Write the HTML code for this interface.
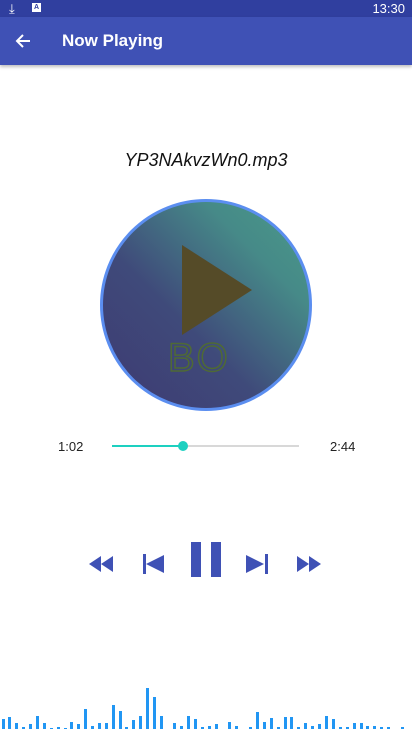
<!DOCTYPE html>
<html><head><meta charset="utf-8"><style>
body{margin:0;width:412px;height:729px;background:#fff;position:relative;overflow:hidden;font-family:"Liberation Sans",Roboto,sans-serif}
.a{position:absolute}
.bar{position:absolute;bottom:0;width:3px;background:#2196f3}
</style></head><body>
<div class="a" style="left:0;top:0;width:412px;height:17px;background:#303f9f"></div>
<div class="a" style="left:9px;top:1px;color:#fff;font-size:13px">⤓</div>
<div class="a" style="left:32px;top:3px;width:9px;height:9px;background:#fff;font-size:7px;color:#303f9f;text-align:center;line-height:9px;font-weight:bold">A</div>
<div class="a" style="right:7px;top:1px;color:#fff;font-size:13px">13:30</div>
<div class="a" style="left:0;top:17px;width:412px;height:48px;background:#3f51b5;box-shadow:0 2px 3px rgba(0,0,0,.25)"></div>
<svg class="a" style="left:14px;top:32px" width="18" height="18" viewBox="0 0 18 18"><path d="M16 9H3M9 3L3 9l6 6" stroke="#fff" stroke-width="2" fill="none"/></svg>
<div class="a" style="left:62px;top:31px;color:#fff;font-size:17px;font-weight:bold">Now Playing</div>
<div class="a" style="left:0;width:412px;top:150px;text-align:center;font-size:18px;font-style:italic;color:#111">YP3NAkvzWn0.mp3</div>
<div class="a" style="left:100px;top:199px;width:206px;height:206px;border-radius:50%;border:3px solid #5b8ef0;background:linear-gradient(45deg,#3e3a72 0%,#3f4a7a 40%,#468a88 75%,#4a9a8a 100%)"></div>
<svg class="a" style="left:180px;top:244px" width="75" height="92"><polygon points="2,1 72,46 2,91" fill="#554b28"/></svg>
<div class="a" style="left:168px;top:336px;font-size:40px;color:transparent;-webkit-text-stroke:1.5px #4f6a35;letter-spacing:2px">BO</div>
<div class="a" style="left:58px;top:439px;font-size:13px;color:#222">1:02</div>
<div class="a" style="left:330px;top:439px;font-size:13px;color:#222">2:44</div>
<div class="a" style="left:112px;top:445px;width:187px;height:2px;background:#d8d8d8"></div>
<div class="a" style="left:112px;top:445px;width:71px;height:2px;background:#1dd0c0"></div>
<div class="a" style="left:178px;top:441px;width:10px;height:10px;border-radius:50%;background:#1dd0c0"></div>
<svg class="a" style="left:0;top:530px" width="412" height="60" fill="#3f51b5">
<polygon points="89,34 101,26 101,42"/><polygon points="101,34 113,26 113,42"/>
<rect x="143" y="24" width="3" height="20"/><polygon points="146,34 164,25 164,43"/>
<rect x="191" y="12" width="10" height="35"/><rect x="211" y="12" width="10" height="35"/>
<polygon points="246,25 264,34 246,43"/><rect x="265" y="24" width="3" height="20"/>
<polygon points="297,26 309,34 297,42"/><polygon points="309,26 321,34 309,42"/>
</svg>
<div class="bar" style="left:2px;height:10px"></div><div class="bar" style="left:8px;height:12px"></div><div class="bar" style="left:15px;height:6px"></div><div class="bar" style="left:22px;height:2px"></div><div class="bar" style="left:29px;height:5px"></div><div class="bar" style="left:36px;height:13px"></div><div class="bar" style="left:43px;height:6px"></div><div class="bar" style="left:50px;height:1px"></div><div class="bar" style="left:57px;height:2px"></div><div class="bar" style="left:64px;height:1px"></div><div class="bar" style="left:70px;height:7px"></div><div class="bar" style="left:77px;height:5px"></div><div class="bar" style="left:84px;height:20px"></div><div class="bar" style="left:91px;height:3px"></div><div class="bar" style="left:98px;height:6px"></div><div class="bar" style="left:105px;height:6px"></div><div class="bar" style="left:112px;height:24px"></div><div class="bar" style="left:119px;height:18px"></div><div class="bar" style="left:125px;height:2px"></div><div class="bar" style="left:132px;height:9px"></div><div class="bar" style="left:139px;height:13px"></div><div class="bar" style="left:146px;height:41px"></div><div class="bar" style="left:153px;height:32px"></div><div class="bar" style="left:160px;height:13px"></div><div class="bar" style="left:173px;height:6px"></div><div class="bar" style="left:180px;height:3px"></div><div class="bar" style="left:187px;height:13px"></div><div class="bar" style="left:194px;height:10px"></div><div class="bar" style="left:201px;height:2px"></div><div class="bar" style="left:208px;height:3px"></div><div class="bar" style="left:215px;height:5px"></div><div class="bar" style="left:228px;height:7px"></div><div class="bar" style="left:235px;height:3px"></div><div class="bar" style="left:249px;height:2px"></div><div class="bar" style="left:256px;height:17px"></div><div class="bar" style="left:263px;height:7px"></div><div class="bar" style="left:270px;height:11px"></div><div class="bar" style="left:277px;height:2px"></div><div class="bar" style="left:284px;height:12px"></div><div class="bar" style="left:290px;height:12px"></div><div class="bar" style="left:297px;height:2px"></div><div class="bar" style="left:304px;height:6px"></div><div class="bar" style="left:311px;height:3px"></div><div class="bar" style="left:318px;height:5px"></div><div class="bar" style="left:325px;height:13px"></div><div class="bar" style="left:332px;height:10px"></div><div class="bar" style="left:339px;height:2px"></div><div class="bar" style="left:346px;height:2px"></div><div class="bar" style="left:353px;height:6px"></div><div class="bar" style="left:360px;height:6px"></div><div class="bar" style="left:366px;height:3px"></div><div class="bar" style="left:373px;height:3px"></div><div class="bar" style="left:380px;height:2px"></div><div class="bar" style="left:387px;height:2px"></div><div class="bar" style="left:401px;height:2px"></div>
</body></html>
